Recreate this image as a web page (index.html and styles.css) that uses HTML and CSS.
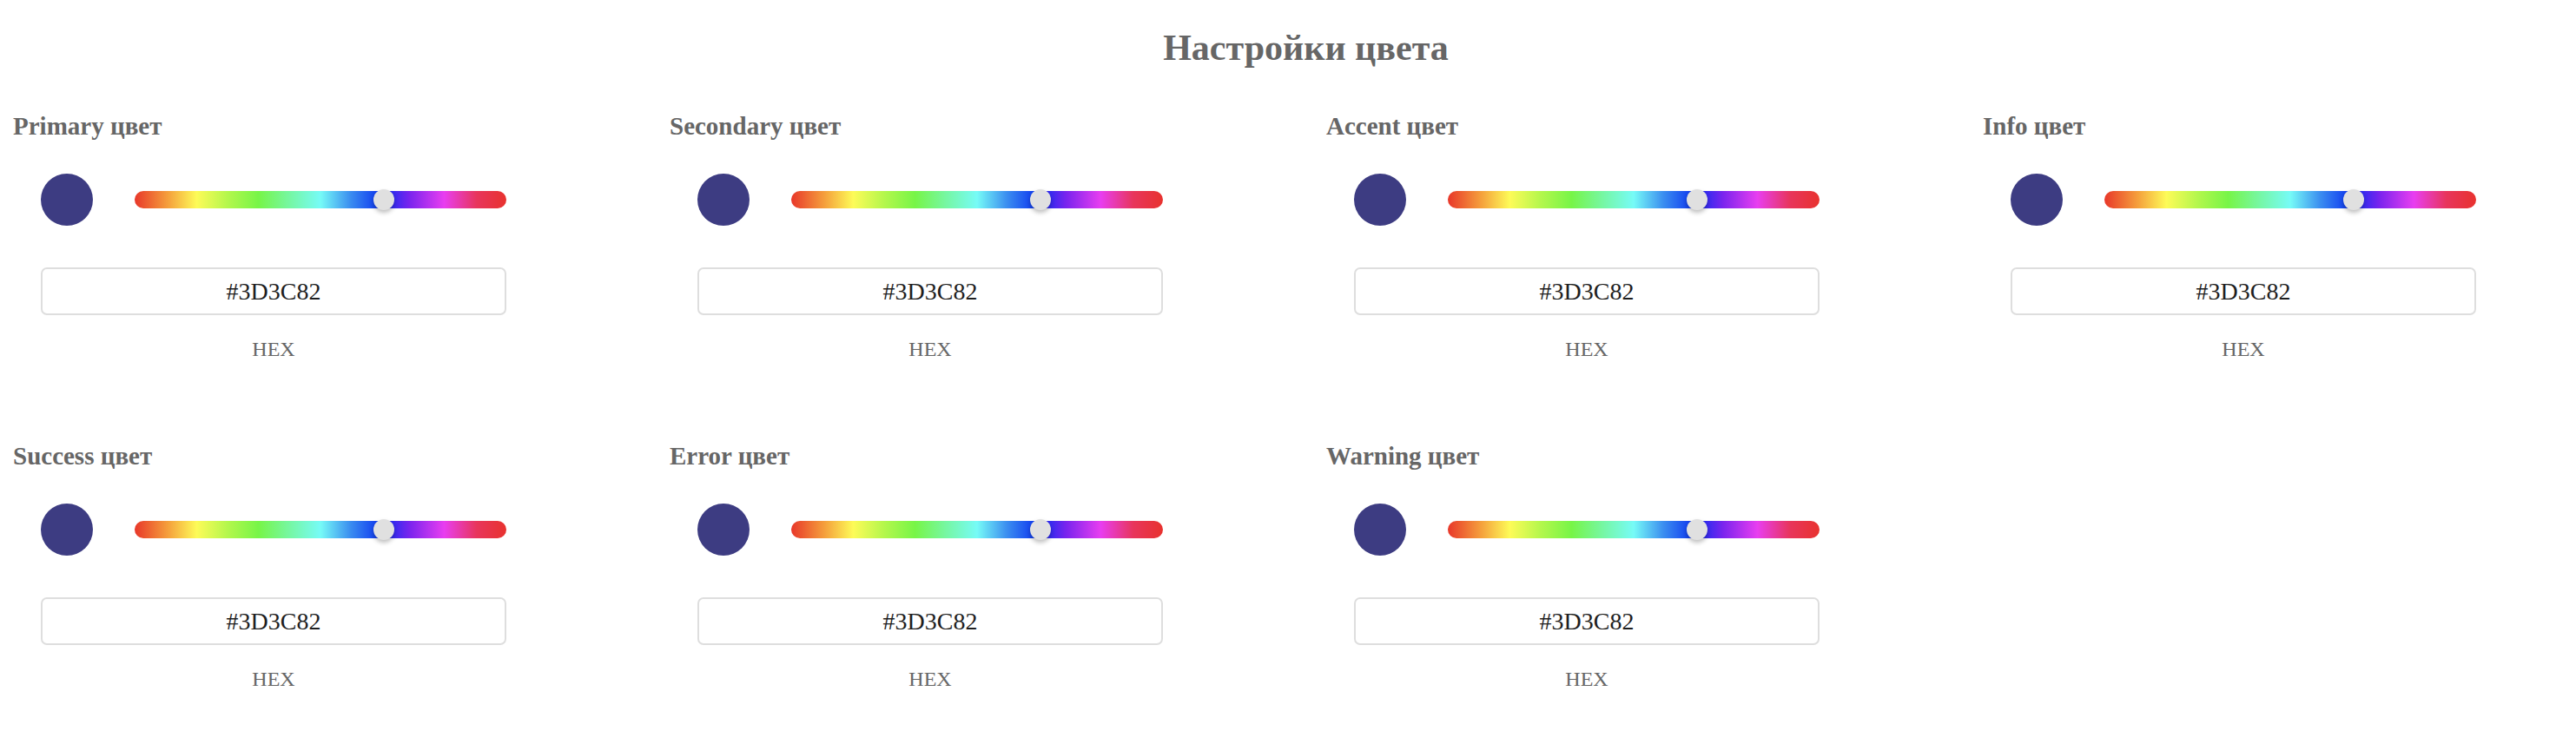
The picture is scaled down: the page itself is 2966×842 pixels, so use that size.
FILE: index.html
```html
<!DOCTYPE html>
<html lang="ru">
<head>
	<meta charset="UTF-8">
	<title>Настройки цвета</title>
	<link rel="stylesheet" href="styles.css">
</head>
<body>
	<div class="page">
		<h1 class="title">Настройки цвета</h1>
		<div class="grid">
			<div class="card">
				<h3 class="label">Primary цвет</h3>
				<div class="picker">
					<div class="swatch"></div>
					<div class="hue"><span class="thumb"></span></div>
				</div>
				<input class="hex" type="text" readonly value="#3D3C82">
				<div class="mode">HEX</div>
			</div>
			<div class="card">
				<h3 class="label">Secondary цвет</h3>
				<div class="picker">
					<div class="swatch"></div>
					<div class="hue"><span class="thumb"></span></div>
				</div>
				<input class="hex" type="text" readonly value="#3D3C82">
				<div class="mode">HEX</div>
			</div>
			<div class="card">
				<h3 class="label">Accent цвет</h3>
				<div class="picker">
					<div class="swatch"></div>
					<div class="hue"><span class="thumb"></span></div>
				</div>
				<input class="hex" type="text" readonly value="#3D3C82">
				<div class="mode">HEX</div>
			</div>
			<div class="card">
				<h3 class="label">Info цвет</h3>
				<div class="picker">
					<div class="swatch"></div>
					<div class="hue"><span class="thumb"></span></div>
				</div>
				<input class="hex" type="text" readonly value="#3D3C82">
				<div class="mode">HEX</div>
			</div>
			<div class="card">
				<h3 class="label">Success цвет</h3>
				<div class="picker">
					<div class="swatch"></div>
					<div class="hue"><span class="thumb"></span></div>
				</div>
				<input class="hex" type="text" readonly value="#3D3C82">
				<div class="mode">HEX</div>
			</div>
			<div class="card">
				<h3 class="label">Error цвет</h3>
				<div class="picker">
					<div class="swatch"></div>
					<div class="hue"><span class="thumb"></span></div>
				</div>
				<input class="hex" type="text" readonly value="#3D3C82">
				<div class="mode">HEX</div>
			</div>
			<div class="card">
				<h3 class="label">Warning цвет</h3>
				<div class="picker">
					<div class="swatch"></div>
					<div class="hue"><span class="thumb"></span></div>
				</div>
				<input class="hex" type="text" readonly value="#3D3C82">
				<div class="mode">HEX</div>
			</div>
		</div>
	</div>
</body>
</html>
```

FILE: styles.css
```css
body {
	margin: 0;
	background: #fff;
	font-family: "Liberation Serif", "DejaVu Serif", serif;
	color: #666;
}
.page {
	padding: 35px 0 0 15px;
	overflow: hidden;
}
.title {
	margin: 0;
	padding-left: 26px;
	font-size: 42px;
	line-height: 40px;
	font-weight: bold;
	text-align: center;
	color: #666;
}
.grid {
	display: grid;
	grid-template-columns: repeat(4, 756px);
	row-gap: 97px;
	margin-top: 56px;
}
.card {
	display: flex;
	flex-direction: column;
}
.label {
	margin: 0;
	font-size: 29px;
	line-height: 29px;
	font-weight: bold;
	color: #666;
}
.picker {
	display: flex;
	align-items: center;
	gap: 48px;
	margin: 40px 0 0 32px;
	height: 60px;
}
.swatch {
	width: 60px;
	height: 60px;
	border-radius: 50%;
	background: #3d3c82;
	flex: none;
}
.hue {
	position: relative;
	width: 428px;
	height: 20px;
	border-radius: 10px;
	background: linear-gradient(to right,
		#e8372a 0%,
		#f5a03c 9%,
		#fdfb58 16.7%,
		#b4f74c 25%,
		#77f547 33.3%,
		#76f7a6 42%,
		#76fbf7 50%,
		#3b8ef0 58%,
		#0a2ff0 66.7%,
		#7a24ee 74%,
		#e83ef0 83.3%,
		#e8355c 92%,
		#e8322e 100%);
}
.thumb {
	position: absolute;
	top: -2px;
	left: calc(67% - 12px);
	width: 24px;
	height: 24px;
	border-radius: 50%;
	background: #e0e0e0;
	box-shadow: 0 3px 5px rgba(0, 0, 0, 0.25);
}
.hex {
	box-sizing: border-box;
	width: 536px;
	height: 55px;
	margin: 48px 0 0 32px;
	border: 2px solid #dedede;
	border-radius: 7px;
	background: #fff;
	font-family: inherit;
	font-size: 28px;
	color: #1e1e1e;
	text-align: center;
	outline: none;
}
.mode {
	width: 536px;
	margin: 27px 0 0 32px;
	font-size: 24px;
	line-height: 24px;
	text-align: center;
	color: #666;
}
```
